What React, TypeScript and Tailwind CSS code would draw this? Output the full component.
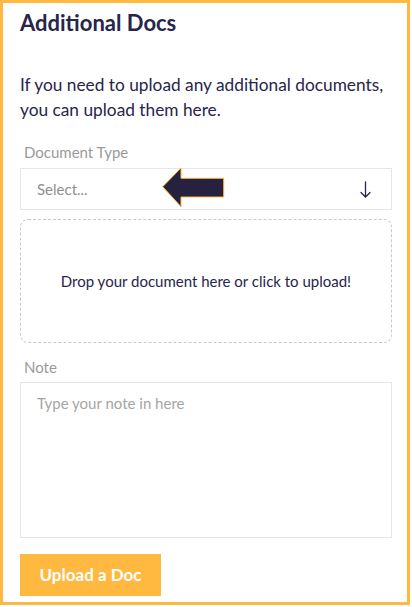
export default function App() {
  return (
    <div className="w-[410px] h-[605px] border-[3px] border-[#FFB840] bg-white font-['Lato','Noto_Sans',sans-serif] text-[#27254a]">
      <div className="pl-[17px] pr-[15px] pt-[6px] flex flex-col">
        {/* heading */}
        <h1 className="text-[22px] leading-[28px] font-bold">Additional Docs</h1>
        <p className="mt-[35px] text-[17.3px] leading-[25px]">
          If you need to upload any additional documents, you can upload them here.
        </p>

        {/* document type */}
        <label className="mt-[20px] ml-[4px] text-[15px] leading-[20px] text-[#9a9a9a]">Document Type</label>
        <div className="relative mt-[6px] h-[42px] border border-[#e6e6e6] flex items-center justify-between pl-[16px] pr-[20px]">
          <span className="text-[15px] text-[#8f8f8f]">Select...</span>
          <svg width="11" height="17" viewBox="0 0 11 17" fill="none" stroke="#27254a" strokeWidth="1.3" strokeLinecap="round">
            <path d="M5.5 1v15M1 11.5l4.5 4.5 4.5-4.5" />
          </svg>
          <svg className="absolute left-[140px] -top-[3px]" width="65" height="43" viewBox="0 0 65 43">
            <polygon
              points="1.7,20.7 20,2 20,12.3 62.7,12.3 62.7,31 20,31 20,40.7"
              fill="#25213f"
              stroke="#FFB840"
              strokeWidth="1"
            />
          </svg>
        </div>

        {/* drop zone */}
        <div className="mt-[9px] h-[124px] rounded-[8px] border border-dashed border-[#c8c8c8] flex items-center justify-center">
          <span className="text-[15px]">Drop your document here or click to upload!</span>
        </div>

        {/* note */}
        <label className="mt-[14px] ml-[4px] text-[15px] leading-[20px] text-[#9a9a9a]">Note</label>
        <div className="mt-[5px] h-[156px] border border-[#e6e6e6] pl-[16px] pt-[8px]">
          <span className="text-[15px] text-[#a5a5a5]">Type your note in here</span>
        </div>

        <button className="mt-[16px] w-[141px] h-[42px] bg-[#FFB840] text-white text-[17px] font-bold">
          Upload a Doc
        </button>
      </div>
    </div>
  );
}
